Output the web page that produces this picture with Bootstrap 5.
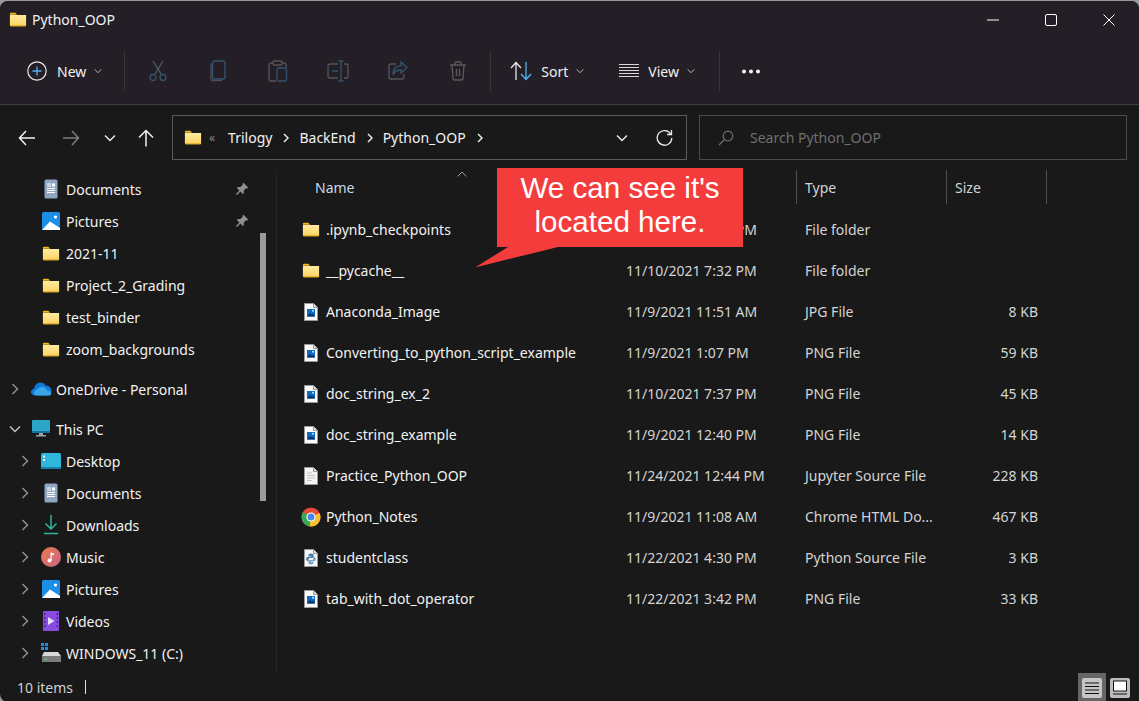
<!DOCTYPE html>
<html lang="en">
<head>
  <meta charset="UTF-8" />
  <title>Python_OOP</title>
  <link href="https://cdn.jsdelivr.net/npm/bootstrap@5.3.6/dist/css/bootstrap.min.css" rel="stylesheet" />
  <style>
    html, body {
      height: 100%;
    }

    body {
      background-color: #9a9a9a;
      overflow: hidden;
      font-family: "Noto Sans", "Open Sans", sans-serif;
      font-size: 14px;
      color: #f2f2f2;
    }

    .win {
      width: 1139px;
      height: 701px;
      margin-top: 1px;
      background: #191919;
      border-radius: 8px 8px 0 8px;
      overflow: hidden;
    }

    .top-part { background: #241f27; height: 104px; border-bottom: 1px solid #3d3d3d; }
    .title-bar { height: 37px; padding-left: 9px; }
    .title-text { margin-left: 5px; font-size: 14px; }
    .win-btn { width: 58px; display: flex; justify-content: center; }
    .win-btns { margin-right: 1px; }

    .tool-bar { height: 66px; padding-left: 26px; }
    .tool-sep { width: 1px; height: 40px; background: #3a363c; flex: none; }
    .tool-icon { width: 60px; display: flex; justify-content: center; }
    .tool-txt { margin-left: 9px; }
    .tool-chev { margin-left: 8px; }
    .sep-new { margin-left: 22px; margin-right: 3px; }
    .sep-edit { margin-left: 2px; margin-right: 19px; }
    .view-ico { margin-left: 35px; }
    .sep-view { margin-left: 24px; margin-right: 21px; }

    .addr-row { height: 65px; padding-top: 10px; }
    .nav-part { height: 45px; }
    .nav-btn { display: flex; justify-content: center; }
    .nav-back { width: 54px; }
    .nav-fwd { width: 34px; }
    .nav-hist { width: 44px; color: #e8e8e8; }
    .nav-up { width: 28px; }
    .addr-box {
      width: 515px;
      height: 45px;
      margin-left: 12px;
      padding-left: 11px;
      border: 1px solid #5a5a5a;
    }
    .crumb-more { color: #8a8a8a; font-size: 12px; margin-left: 7px; }
    .crumb-first { margin-left: 13px; }
    .crumb-chev { margin: 0 10px 0 11px; }
    .addr-refresh { margin-left: 27px; margin-right: 13px; }
    .search-box {
      width: 428px;
      height: 45px;
      margin-left: 12px;
      padding-left: 18px;
      border: 1px solid #4b4b4b;
      color: #6f6f6f;
    }
    .search-txt { margin-left: 16px; }

    .body-part { min-height: 0; }
    .side-pane {
      width: 277px;
      padding-top: 3px;
      border-right: 1px solid #252525;
    }
    .side-row { height: 32px; padding-right: 27px; }
    .side-gap { margin-top: 8px; }
    .chev-slot { width: 16px; margin-left: 17px; display: flex; justify-content: center; flex: none; }
    .chev-slot-top { margin-left: 7px; }
    .ico-slot { width: 24px; margin-left: 6px; margin-right: 3px; display: flex; justify-content: center; flex: none; }
    .side-scroll {
      position: absolute;
      left: 260px;
      top: 63px;
      width: 6px;
      height: 268px;
      background: #9b9b9b;
    }
    .pin-ico { margin-left: auto; }

    .file-pane { min-width: 0; }
    .head-row { height: 39px; color: #c8d8e8; }
    .file-row { height: 41px; }
    .c-name { width: 349px; padding-left: 24px; flex: none; }
    .c-date { width: 171px; flex: none; color: #d4d4d4; }
    .c-type { width: 150px; padding-left: 8px; flex: none; color: #d4d4d4; white-space: nowrap; }
    .c-size { width: 100px; text-align: right; padding-right: 9px; flex: none; color: #d4d4d4; }
    .head-name { padding-left: 38px; }
    .head-sep { border-right: 1px solid #4f4f4f; height: 34px; display: flex; align-items: center; }
    .head-size { justify-content: flex-start; padding-left: 8px; }
    .date-cut { display: block; width: 131px; text-align: right; }
    .sort-up { position: absolute; left: 180px; top: 1px; }
    .file-ico { width: 20px; margin-right: 5px; display: flex; justify-content: center; flex: none; }

    .call-out {
      position: absolute;
      left: 220px;
      top: -2px;
      width: 246px;
      height: 79px;
      background: #f43c3c;
      color: #fff;
      font-family: "Liberation Sans", Arial, sans-serif;
      font-size: 29.6px;
      line-height: 34px;
      text-align: center;
      padding-top: 3px;
    }
    .call-tail { position: absolute; left: -22px; top: 79px; }

    .status-bar { height: 30px; padding-left: 17px; color: #d0d0d0; }
    .status-sep { width: 1px; height: 14px; background: #e0e0e0; margin-left: 12px; }
    .view-btns { margin-left: auto; margin-right: 5px; align-self: flex-end; }
    .view-on { width: 28px; height: 29px; background: #666; display: flex; align-items: center; justify-content: center; }
    .view-off { width: 28px; height: 29px; display: flex; align-items: center; justify-content: center; }
  </style>
</head>
<body>
  <svg width="0" height="0" class="position-absolute">
    <defs>
      <linearGradient id="fold" x1="0" y1="0" x2="0" y2="1"><stop offset="0" stop-color="#ffe9a0"/><stop offset="1" stop-color="#fbd462"/></linearGradient>
      <symbol id="folder" viewBox="0 0 20 16">
        <path d="M1 1.500C1 .9 1.400.5 2 .5h5l2 2.200H1z" fill="#f5b81f"/>
        <path d="M1 3h18v11.500c0 .6-.4 1-1 1H2c-.6 0-1-.4-1-1z" fill="url(#fold)"/>
        <path d="M1 14.400h18v.4c0 .5-.4.7-1 .7H2c-.6 0-1-.3-1-.7z" fill="#e6a91a"/>
      </symbol>
      <symbol id="img-file" viewBox="0 0 14 18">
        <path d="M.5.5h9l4 4v13H.5z" fill="#fafafa" stroke="#9a9a9a"/>
        <path d="M9.500.5v4h4" fill="#ddd" stroke="#9a9a9a"/>
        <rect x="3" y="6" width="8" height="7.500" fill="#0f6cbd"/>
        <path d="M3 13.500l3-3.600 2 1.800 1.200-1 1.800 2.800z" fill="#0b2f66"/>
        <circle cx="9" cy="7.800" r="1" fill="#cfe7fb"/>
      </symbol>
      <symbol id="txt-file" viewBox="0 0 14 18">
        <path d="M.5.5h9l4 4v13H.5z" fill="#f3f3f3" stroke="#9a9a9a"/>
        <path d="M9.500.5v4h4" fill="#ddd" stroke="#9a9a9a"/>
        <path d="M3 6h5M3 8.500h8M3 11h8M3 13.500h5" stroke="#c4c4c4" stroke-width="1"/>
      </symbol>
      <symbol id="py-file" viewBox="0 0 14 18">
        <path d="M.5.5h9l4 4v13H.5z" fill="#f6f6f6" stroke="#9a9a9a"/>
        <path d="M9.500.5v4h4" fill="#ddd" stroke="#9a9a9a"/>
        <path d="M7 4.500c-2 0-2.600.8-2.600 2v1h2.800v.6H3.500C2.500 8.100 2.200 9 2.200 10s.4 2 1.300 2h1v-1.500c0-.9.7-1.500 1.600-1.500h2.300c.8 0 1.300-.5 1.300-1.300V6.500c0-1.300-.9-2-2.700-2z" fill="#4b7fa8"/>
        <path d="M7 15.500c2 0 2.600-.8 2.600-2v-1H6.800v-.6h3.700c1 0 1.300-.9 1.300-1.900s-.4-2-1.300-2h-1v1.500c0 .9-.7 1.500-1.600 1.500H5.600c-.8 0-1.300.5-1.300 1.300v1.200c0 1.300.9 2 2.700 2z" fill="#7ba5c4"/>
      </symbol>
      <symbol id="chrome" viewBox="0 0 20 20">
        <circle cx="10" cy="10" r="9.500" fill="#e8483a"/>
        <path d="M10 10L18.600 6A9.500 9.500 0 0 1 8.500 19.400z" fill="#fbc02d"/>
        <path d="M10 10L8.500 19.400A9.500 9.500 0 0 1 1.900 5z" fill="#34a853"/>
        <circle cx="10" cy="10" r="4.600" fill="#fff"/>
        <circle cx="10" cy="10" r="3.500" fill="#4a84ee"/>
      </symbol>
      <symbol id="doc-ico" viewBox="0 0 14 20">
        <rect x=".5" y=".5" width="13" height="19" rx="1.500" fill="#8ea8c3"/>
        <path d="M3 5h4M3 7h4M3 9.500h8M3 11.500h8M3 13.500h8" stroke="#fff" stroke-width="1"/>
        <rect x="8" y="4.500" width="3" height="3" fill="#fff"/>
      </symbol>
      <symbol id="pic-ico" viewBox="0 0 18 18">
        <rect width="18" height="18" rx="1.500" fill="#1b8fe6"/>
        <circle cx="13.500" cy="5" r="1.600" fill="#fff"/>
        <path d="M0 18l8-8.500L18 16v2z" fill="#fff"/>
      </symbol>
      <symbol id="chev-r" viewBox="0 0 8 12"><path d="M1.500 1l5 5-5 5" fill="none" stroke="#8a8a8a" stroke-width="1.600"/></symbol>
      <symbol id="chev-d" viewBox="0 0 12 8"><path d="M1 1.500l5 5 5-5" fill="none" stroke="currentColor" stroke-width="1.500"/></symbol>
      <symbol id="pin" viewBox="0 0 14 14"><path d="M8.500.8l4.700 4.700-1.200 1-.8-.3-2.400 2.400.2 2.300-1.100 1.100-2.500-2.500-3.400 3.400-1-1 3.400-3.400L1.900 6l1.100-1.100 2.300.2 2.400-2.400-.3-.8z" fill="#8f8f8f"/></symbol>
      <symbol id="crumb" viewBox="0 0 6 10"><path d="M1 1l4 4-4 4" fill="none" stroke="#e8e8e8" stroke-width="1.500"/></symbol>
    </defs>
  </svg>

  <div class="win d-flex flex-column">
    <div class="top-part flex-shrink-0">
      <div class="title-bar d-flex align-items-center">
        <svg width="18" height="15"><use href="#folder"/></svg>
        <span class="title-text">Python_OOP</span>
        <div class="win-btns d-flex ms-auto">
          <div class="win-btn"><svg width="12" height="12"><path d="M0 6h12" stroke="#fff"/></svg></div>
          <div class="win-btn"><svg width="12" height="12"><rect x=".5" y=".5" width="11" height="11" rx="1.500" fill="none" stroke="#fff"/></svg></div>
          <div class="win-btn"><svg width="12" height="12"><path d="M.5.5l11 11M11.500.5l-11 11" stroke="#fff"/></svg></div>
        </div>
      </div>
      <div class="tool-bar d-flex align-items-center">
        <svg width="22" height="22"><circle cx="11" cy="11" r="9.200" fill="none" stroke="#e8e8e8" stroke-width="1.200"/><path d="M11 6.500v9M6.500 11h9" stroke="#52b4f0" stroke-width="1.300"/></svg>
        <span class="tool-txt">New</span>
        <svg class="tool-chev" width="8" height="6" color="#bbb"><use href="#chev-d"/></svg>
        <div class="tool-sep sep-new"></div>
        <div class="tool-icon">
          <svg width="20" height="22" fill="none" stroke="#4f5a66" stroke-width="1.300"><path d="M5 1l8 13M15 1L7 14"/><circle cx="5" cy="17.500" r="3" stroke="#34536e"/><circle cx="15" cy="17.500" r="3" stroke="#34536e"/></svg>
        </div>
        <div class="tool-icon">
          <svg width="18" height="22" fill="none" stroke-width="1.300"><path d="M2 3.500v15c0 1.200.8 2 2 2h9" stroke="#4f4f55"/><rect x="3.500" y="1" width="12.500" height="18" rx="2" stroke="#34536e"/></svg>
        </div>
        <div class="tool-icon">
          <svg width="20" height="22" fill="none" stroke-width="1.300"><path d="M5 3H3c-1 0-2 .8-2 2v14c0 1.200 1 2 2 2h5M14 3h2c1 0 2 .8 2 2v2" stroke="#55555a"/><rect x="5" y="1" width="9" height="4" rx="1" stroke="#55555a"/><rect x="9" y="8" width="9.500" height="13" rx="1.500" stroke="#34536e"/></svg>
        </div>
        <div class="tool-icon">
          <svg width="22" height="22" fill="none" stroke-width="1.300"><path d="M11 4H3c-1 0-2 .8-2 2v10c0 1.200 1 2 2 2h8M17 4h2c1 0 2 .8 2 2v10c0 1.200-1 2-2 2h-2" stroke="#55555a"/><path d="M14 1v20M11.500 1h5M11.500 21h5M5 11h6" stroke="#34536e"/></svg>
        </div>
        <div class="tool-icon">
          <svg width="20" height="20" fill="none" stroke-width="1.300"><path d="M8 3H3C2 3 1 3.800 1 5v11c0 1.200 1 2 2 2h11c1 0 2-.8 2-2v-3" stroke="#55555a"/><path d="M13 1l6 5.500-6 5.500V9C9 9 6.500 10.500 5 14c0-6 3-9 8-9.500z" stroke="#34536e"/></svg>
        </div>
        <div class="tool-icon">
          <svg width="18" height="20" fill="none" stroke="#5a5a5e" stroke-width="1.300"><path d="M1 4h16M6 4V2c0-.6.4-1 1-1h4c.6 0 1 .4 1 1v2M3 4l1 13c0 1 .8 2 2 2h6c1.200 0 2-1 2-2l1-13M7.500 8v7M10.500 8v7"/></svg>
        </div>
        <div class="tool-sep sep-edit"></div>
        <svg width="22" height="20" fill="none" stroke-width="1.300"><path d="M6 19V2M1 7l5-5.500L11 7" stroke="#e8e8e8"/><path d="M16 1v17M11 13l5 5.500 5-5.500" stroke="#52b4f0"/></svg>
        <span class="tool-txt">Sort</span>
        <svg class="tool-chev" width="8" height="6" color="#bbb"><use href="#chev-d"/></svg>
        <svg class="view-ico" width="20" height="14" stroke="#d8d8d8"><path d="M0 .5h20M0 3.500h20M0 6.500h20M0 9.500h20M0 12.500h20"/></svg>
        <span class="tool-txt">View</span>
        <svg class="tool-chev" width="8" height="6" color="#bbb"><use href="#chev-d"/></svg>
        <div class="tool-sep sep-view"></div>
        <svg width="20" height="5" fill="#f2f2f2"><circle cx="3" cy="2.500" r="2"/><circle cx="10" cy="2.500" r="2"/><circle cx="17" cy="2.500" r="2"/></svg>
      </div>
    </div>

    <div class="addr-row d-flex flex-shrink-0">
      <div class="nav-part d-flex align-items-center">
        <div class="nav-btn nav-back"><svg width="18" height="16" fill="none" stroke="#f2f2f2" stroke-width="1.500"><path d="M17 8H1.500M8 1L1.500 8 8 15"/></svg></div>
        <div class="nav-btn nav-fwd"><svg width="18" height="16" fill="none" stroke="#7d7d7d" stroke-width="1.500"><path d="M1 8h15.500M10 1l6.500 7-6.500 7"/></svg></div>
        <div class="nav-btn nav-hist"><svg width="12" height="8"><use href="#chev-d"/></svg></div>
        <div class="nav-btn nav-up"><svg width="16" height="18" fill="none" stroke="#f2f2f2" stroke-width="1.500"><path d="M8 17.500V1.500M1 8.500L8 1.500l7 7"/></svg></div>
      </div>
      <div class="addr-box d-flex align-items-center">
        <svg width="18" height="15"><use href="#folder"/></svg>
        <span class="crumb-more">«</span>
        <span class="crumb-first">Trilogy</span>
        <svg class="crumb-chev" width="6" height="10"><use href="#crumb"/></svg>
        <span>BackEnd</span>
        <svg class="crumb-chev" width="6" height="10"><use href="#crumb"/></svg>
        <span>Python_OOP</span>
        <svg class="crumb-chev" width="6" height="10"><use href="#crumb"/></svg>
        <svg class="ms-auto" width="14" height="8" color="#e8e8e8"><use href="#chev-d"/></svg>
        <svg class="addr-refresh" width="17" height="17" fill="none" stroke="#e8e8e8" stroke-width="1.300"><path d="M14.800 5.200A7.300 7.300 0 1 0 15.800 9"/><path d="M15.500 1v4.500H11"/></svg>
      </div>
      <div class="search-box d-flex align-items-center">
        <svg width="16" height="16" fill="none" stroke="#6f6f6f" stroke-width="1.200"><circle cx="10" cy="6" r="4.800"/><path d="M6.500 9.500L1 15"/></svg>
        <span class="search-txt">Search Python_OOP</span>
      </div>
    </div>

    <div class="body-part d-flex flex-grow-1 position-relative">
      <div class="side-pane flex-shrink-0 position-relative">
        <div class="side-row d-flex align-items-center"><span class="chev-slot"></span><span class="ico-slot"><svg width="14" height="20"><use href="#doc-ico"/></svg></span><span>Documents</span><svg class="pin-ico" width="14" height="14"><use href="#pin"/></svg></div>
        <div class="side-row d-flex align-items-center"><span class="chev-slot"></span><span class="ico-slot"><svg width="18" height="18"><use href="#pic-ico"/></svg></span><span>Pictures</span><svg class="pin-ico" width="14" height="14"><use href="#pin"/></svg></div>
        <div class="side-row d-flex align-items-center"><span class="chev-slot"></span><span class="ico-slot"><svg width="18" height="15"><use href="#folder"/></svg></span><span>2021-11</span></div>
        <div class="side-row d-flex align-items-center"><span class="chev-slot"></span><span class="ico-slot"><svg width="18" height="15"><use href="#folder"/></svg></span><span>Project_2_Grading</span></div>
        <div class="side-row d-flex align-items-center"><span class="chev-slot"></span><span class="ico-slot"><svg width="18" height="15"><use href="#folder"/></svg></span><span>test_binder</span></div>
        <div class="side-row d-flex align-items-center"><span class="chev-slot"></span><span class="ico-slot"><svg width="18" height="15"><use href="#folder"/></svg></span><span>zoom_backgrounds</span></div>
        <div class="side-row side-gap d-flex align-items-center"><span class="chev-slot chev-slot-top"><svg width="8" height="12"><use href="#chev-r"/></svg></span><span class="ico-slot"><svg width="21" height="14" viewBox="0 0 21 14"><path d="M4 13.500C1.800 13.500 0 12 0 10c0-1.800 1.300-3.200 3-3.500C3.700 3 6.400.5 9.500.5c2.300 0 4.200 1.200 5.200 3 3 0 5.300 2 5.800 4.500.4 3-1.500 5.500-4.500 5.500z" fill="#0f78d4"/><path d="M6 13.500c-2 0-3-1.300-3-2.800 0-1.700 1.300-3 3-3 1-2 2.800-3 5-3 2.500 0 4.500 1.400 5 3.800 2 0 4 1 4.300 3 .1 1-.7 2-2.300 2z" fill="#38a4ea"/></svg></span><span>OneDrive - Personal</span></div>
        <div class="side-row side-gap d-flex align-items-center"><span class="chev-slot chev-slot-top"><svg width="12" height="8" color="#c0c0c0"><use href="#chev-d"/></svg></span><span class="ico-slot"><svg width="18" height="18" viewBox="0 0 18 18"><rect width="18" height="13" rx="1" fill="#2aa6c9"/><rect y="11" width="18" height="2" fill="#176f9c"/><path d="M7 13h4v2h3v1.500H4V15h3z" fill="#9aa4ad"/></svg></span><span>This PC</span></div>
        <div class="side-row d-flex align-items-center"><span class="chev-slot"><svg width="8" height="12"><use href="#chev-r"/></svg></span><span class="ico-slot"><svg width="20" height="16" viewBox="0 0 20 16"><rect width="20" height="16" rx="1.500" fill="#2fb6dc"/><rect y="14" width="20" height="2" fill="#1680a8"/><rect x="2" y="2.500" width="2" height="2" fill="#fff"/><rect x="2" y="6" width="2" height="2" fill="#fff"/></svg></span><span>Desktop</span></div>
        <div class="side-row d-flex align-items-center"><span class="chev-slot"><svg width="8" height="12"><use href="#chev-r"/></svg></span><span class="ico-slot"><svg width="14" height="20"><use href="#doc-ico"/></svg></span><span>Documents</span></div>
        <div class="side-row d-flex align-items-center"><span class="chev-slot"><svg width="8" height="12"><use href="#chev-r"/></svg></span><span class="ico-slot"><svg width="14" height="20" viewBox="0 0 14 20" fill="none" stroke="#2fb59a" stroke-width="1.500"><path d="M7 0v14M1.500 8.500L7 14l5.500-5.500M0 18.500h14"/></svg></span><span>Downloads</span></div>
        <div class="side-row d-flex align-items-center"><span class="chev-slot"><svg width="8" height="12"><use href="#chev-r"/></svg></span><span class="ico-slot"><svg width="20" height="20" viewBox="0 0 20 20"><defs><linearGradient id="mus" x1="0" y1="0" x2="1" y2="1"><stop offset="0" stop-color="#ea7b4b"/><stop offset="1" stop-color="#c9648a"/></linearGradient></defs><circle cx="10" cy="10" r="10" fill="url(#mus)"/><circle cx="8.500" cy="13.500" r="2" fill="#fff"/><path d="M9.500 13.500V5.500l3.500 1v1.800l-2.300-.6v5.800z" fill="#fff"/></svg></span><span>Music</span></div>
        <div class="side-row d-flex align-items-center"><span class="chev-slot"><svg width="8" height="12"><use href="#chev-r"/></svg></span><span class="ico-slot"><svg width="18" height="18"><use href="#pic-ico"/></svg></span><span>Pictures</span></div>
        <div class="side-row d-flex align-items-center"><span class="chev-slot"><svg width="8" height="12"><use href="#chev-r"/></svg></span><span class="ico-slot"><svg width="16" height="20" viewBox="0 0 16 20"><rect width="16" height="20" rx="1" fill="#8a4be0"/><path d="M1 2h1.500v2H1zM1 6h1.500v2H1zM1 10h1.500v2H1zM1 14h1.500v2H1zM13.500 2H15v2h-1.500zM13.500 6H15v2h-1.500zM13.500 10H15v2h-1.500zM13.500 14H15v2h-1.500z" fill="#4a2390"/><path d="M5 6l6.500 4L5 14z" fill="#e8dcff"/></svg></span><span>Videos</span></div>
        <div class="side-row d-flex align-items-center"><span class="chev-slot"><svg width="8" height="12"><use href="#chev-r"/></svg></span><span class="ico-slot"><svg width="20" height="20" viewBox="0 0 20 20"><path d="M0 0h3v3H0zM4 0h3v3H4zM0 4h3v3H0zM4 4h3v3H4z" fill="#1d8fe0"/><path d="M3 9h14l3 4v6H1v-6z" fill="#d8d8d8"/><rect x="1" y="13" width="19" height="6" fill="#7b7b7b"/><rect x="4" y="15.500" width="2" height="1.500" fill="#5fd35f"/></svg></span><span>WINDOWS_11 (C:)</span></div>
        <div class="side-scroll"></div>
      </div>

      <div class="file-pane flex-grow-1 position-relative">
        <div class="head-row d-flex">
          <div class="c-name head-name head-sep">Name</div>
          <div class="c-date head-sep"></div>
          <div class="c-type head-sep">Type</div>
          <div class="c-size head-sep head-size">Size</div>
          <svg class="sort-up" width="10" height="6" fill="none" stroke="#9a9a9a"><path d="M.5 5.500L5 1l4.500 4.500"/></svg>
        </div>
        <div class="file-row d-flex align-items-center"><div class="c-name d-flex align-items-center"><span class="file-ico"><svg width="18" height="15"><use href="#folder"/></svg></span>.ipynb_checkpoints</div><div class="c-date"><span class="date-cut">PM</span></div><div class="c-type">File folder</div><div class="c-size"></div></div>
        <div class="file-row d-flex align-items-center"><div class="c-name d-flex align-items-center"><span class="file-ico"><svg width="18" height="15"><use href="#folder"/></svg></span>__pycache__</div><div class="c-date">11/10/2021 7:32 PM</div><div class="c-type">File folder</div><div class="c-size"></div></div>
        <div class="file-row d-flex align-items-center"><div class="c-name d-flex align-items-center"><span class="file-ico"><svg width="14" height="18"><use href="#img-file"/></svg></span>Anaconda_Image</div><div class="c-date">11/9/2021 11:51 AM</div><div class="c-type">JPG File</div><div class="c-size">8 KB</div></div>
        <div class="file-row d-flex align-items-center"><div class="c-name d-flex align-items-center"><span class="file-ico"><svg width="14" height="18"><use href="#img-file"/></svg></span>Converting_to_python_script_example</div><div class="c-date">11/9/2021 1:07 PM</div><div class="c-type">PNG File</div><div class="c-size">59 KB</div></div>
        <div class="file-row d-flex align-items-center"><div class="c-name d-flex align-items-center"><span class="file-ico"><svg width="14" height="18"><use href="#img-file"/></svg></span>doc_string_ex_2</div><div class="c-date">11/10/2021 7:37 PM</div><div class="c-type">PNG File</div><div class="c-size">45 KB</div></div>
        <div class="file-row d-flex align-items-center"><div class="c-name d-flex align-items-center"><span class="file-ico"><svg width="14" height="18"><use href="#img-file"/></svg></span>doc_string_example</div><div class="c-date">11/9/2021 12:40 PM</div><div class="c-type">PNG File</div><div class="c-size">14 KB</div></div>
        <div class="file-row d-flex align-items-center"><div class="c-name d-flex align-items-center"><span class="file-ico"><svg width="14" height="18"><use href="#txt-file"/></svg></span>Practice_Python_OOP</div><div class="c-date">11/24/2021 12:44 PM</div><div class="c-type">Jupyter Source File</div><div class="c-size">228 KB</div></div>
        <div class="file-row d-flex align-items-center"><div class="c-name d-flex align-items-center"><span class="file-ico"><svg width="20" height="20"><use href="#chrome"/></svg></span>Python_Notes</div><div class="c-date">11/9/2021 11:08 AM</div><div class="c-type">Chrome HTML Do...</div><div class="c-size">467 KB</div></div>
        <div class="file-row d-flex align-items-center"><div class="c-name d-flex align-items-center"><span class="file-ico"><svg width="14" height="18"><use href="#py-file"/></svg></span>studentclass</div><div class="c-date">11/22/2021 4:30 PM</div><div class="c-type">Python Source File</div><div class="c-size">3 KB</div></div>
        <div class="file-row d-flex align-items-center"><div class="c-name d-flex align-items-center"><span class="file-ico"><svg width="14" height="18"><use href="#img-file"/></svg></span>tab_with_dot_operator</div><div class="c-date">11/22/2021 3:42 PM</div><div class="c-type">PNG File</div><div class="c-size">33 KB</div></div>

        <div class="call-out">
          We can see it's<br>located here.
          <svg class="call-tail" width="90" height="21"><path d="M0 20.500L33 0h50z" fill="#f43c3c"/></svg>
        </div>
      </div>
    </div>

    <div class="status-bar d-flex align-items-center flex-shrink-0">
      <span>10 items</span>
      <div class="status-sep"></div>
      <div class="view-btns d-flex">
        <div class="view-on"><svg width="20" height="20"><rect width="20" height="20" rx="2" fill="#c6c6c6"/><path d="M3 5h14M3 8.500h14M3 12h14M3 15.500h14" stroke="#111" stroke-width="1.200"/></svg></div>
        <div class="view-off"><svg width="20" height="20"><rect width="20" height="20" rx="2" fill="#bdbdbd"/><rect x="3.500" y="3" width="13" height="10" fill="#fff" stroke="#111"/><path d="M3 16h14" stroke="#111"/></svg></div>
      </div>
    </div>
  </div>

  <script src="https://cdn.jsdelivr.net/npm/bootstrap@5.3.6/dist/js/bootstrap.bundle.min.js"></script>
</body>
</html>
